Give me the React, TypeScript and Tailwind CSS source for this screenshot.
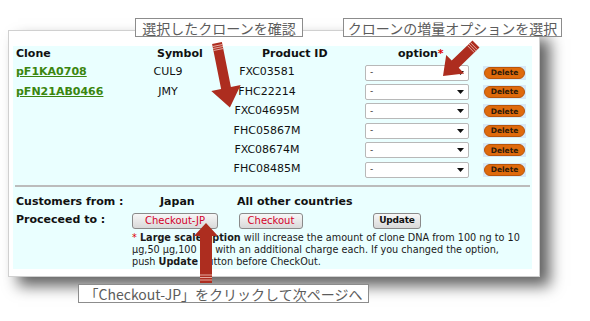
import React from "react";

const rows = [
  { clone: "pF1KA0708", symbol: "CUL9", pid: "FXC03581" },
  { clone: "pFN21AB0466", symbol: "JMY", pid: "FHC22214" },
  { clone: "", symbol: "", pid: "FXC04695M" },
  { clone: "", symbol: "", pid: "FHC05867M" },
  { clone: "", symbol: "", pid: "FXC08674M" },
  { clone: "", symbol: "", pid: "FHC08485M" },
];

const Label = ({ text, className }: { text: string; className: string }) => (
  <div
    className={`absolute h-[19px] flex items-center justify-center bg-white border border-[#8c8c8c] text-[14px] leading-none text-[#5c5c5c] font-['Noto_Sans_CJK_JP',sans-serif] ${className}`}
  >
    {text}
  </div>
);

const OptionSelect = () => (
  <div className="ml-[5px] w-[104px] h-[16px] bg-white border border-[#b8b8b8] rounded-[2px] flex items-center justify-between pl-[4px] pr-[4px]">
    <span className="text-[9px] text-[#333]">-</span>
    <svg width="7" height="4" viewBox="0 0 7 4">
      <polygon points="0,0 7,0 3.5,4" fill="#111" />
    </svg>
  </div>
);

const DeleteButton = () => (
  <div className="ml-[8px] w-[43px] h-[14px] bg-[#d7e9f7] flex items-center justify-center">
    <div className="w-[41px] h-[12px] rounded-full bg-[#df6a0c] border border-[#b8560a] flex items-center justify-center text-[7.5px] font-bold text-[#2e1a08] leading-none">
      Delete
    </div>
  </div>
);

const GreyButton = ({ children, className }: { children: React.ReactNode; className: string }) => (
  <div
    className={`h-[16px] flex items-center justify-center rounded-[3px] border border-[#8a8a8a] bg-gradient-to-b from-[#f7f7f7] to-[#d9d9d9] leading-none ${className}`}
  >
    {children}
  </div>
);

const Arrows = () => (
  <svg className="absolute inset-0 pointer-events-none" width="590" height="321" viewBox="0 0 590 321">
    {/* arrow to product list */}
    <polygon
      points="212.1,44 221.9,42 230.9,87 240.7,85.1 229.9,107.6 211.3,90.9 221.1,89"
      fill="#ad2d1f"
    />
    <line x1="212.6" y1="46.5" x2="222.4" y2="44.5" stroke="#f3c9c2" strokeWidth="0.8" />
    <line x1="213.1" y1="48.5" x2="222.9" y2="46.5" stroke="#f3c9c2" strokeWidth="0.8" />
    <line x1="213.6" y1="50.5" x2="223.4" y2="48.5" stroke="#f3c9c2" strokeWidth="0.8" />
    {/* arrow to option select */}
    <polygon
      points="479.5,47.6 472.5,40.4 451.7,60.6 446.2,54.9 443,76 464.2,73.5 458.7,67.8"
      fill="#ad2d1f"
    />
    <line x1="477.4" y1="49.7" x2="470.4" y2="42.5" stroke="#f3c9c2" strokeWidth="0.8" />
    <line x1="475.9" y1="51.2" x2="468.9" y2="44" stroke="#f3c9c2" strokeWidth="0.8" />
    <line x1="474.4" y1="52.7" x2="467.4" y2="45.5" stroke="#f3c9c2" strokeWidth="0.8" />
    {/* arrow to checkout-jp */}
    <polygon points="206,223 218,236 212,236 212,283 200,283 200,236 194,236" fill="#ad2d1f" />
    <line x1="200" y1="275" x2="212" y2="275" stroke="#f3c9c2" strokeWidth="0.8" />
    <line x1="200" y1="277.5" x2="212" y2="277.5" stroke="#f3c9c2" strokeWidth="0.8" />
    <line x1="200" y1="280" x2="212" y2="280" stroke="#f3c9c2" strokeWidth="0.8" />
  </svg>
);

export default function App() {
  return (
    <div className="relative w-[590px] h-[321px] bg-white overflow-hidden font-['DejaVu_Sans',sans-serif] text-[#111]">
      <div className="pt-[30px] pl-[8px]">
        <div className="w-[532px] h-[247px] bg-white border border-[#d0d0d0] shadow-[10px_9px_14px_rgba(0,0,0,0.62)] pt-[15px] pl-[4px]">
          <div className="w-[519px] h-[223px] bg-[#eaffff]">
            <div className="grid grid-cols-[132px_75px_140px_115px_57px]">
              <div className="h-[17px] flex items-center pl-[3px] text-[11px] font-bold">Clone</div>
              <div className="h-[17px] flex items-center pl-[12px] text-[11px] font-bold">Symbol</div>
              <div className="h-[17px] flex items-center pl-[42px] text-[11px] font-bold">Product ID</div>
              <div className="h-[17px] flex items-center pl-[38px] text-[11px] font-bold">
                option<span className="text-[#e00000]">*</span>
              </div>
              <div className="h-[17px]" />
              {rows.map((r) => (
                <React.Fragment key={r.pid}>
                  <div className="h-[19.4px] flex items-center pl-[3px] text-[11px] font-bold text-[#3b860f] underline">
                    {r.clone}
                  </div>
                  <div className="h-[19.4px] flex items-center pl-[8px]">
                    <span className="w-[30px] text-center text-[11px]">{r.symbol}</span>
                  </div>
                  <div className="h-[19.4px] flex items-center">
                    <span className="w-[94px] text-center text-[11px]">{r.pid}</span>
                  </div>
                  <div className="h-[19.4px] flex items-center">
                    <OptionSelect />
                  </div>
                  <div className="h-[19.4px] flex items-center">
                    <DeleteButton />
                  </div>
                </React.Fragment>
              ))}
            </div>

            <div className="mt-[6px] ml-[2px] w-[515px] h-[2px] bg-[#bcbcbc]" />

            <div className="mt-[7px] h-[16px] grid grid-cols-[119px_100px_auto] items-center text-[11px] font-bold">
              <div className="pl-[3px]">Customers from :</div>
              <div className="pl-[28px]">Japan</div>
              <div className="pl-[5px]">All other countries</div>
            </div>

            <div className="mt-[2px] h-[16px] grid grid-cols-[119px_100px_auto] items-center">
              <div className="pl-[3px] text-[11px] font-bold">Proceceed to :</div>
              <div>
                <GreyButton className="w-[86px] text-[10px] text-[#d4002a]">Checkout-JP</GreyButton>
              </div>
              <div className="flex items-center pl-[7px]">
                <GreyButton className="w-[64px] text-[10px] text-[#d4002a]">Checkout</GreyButton>
                <GreyButton className="ml-[70px] w-[48px] text-[9px] font-bold tracking-[-0.2px] text-[#111]">
                  Update
                </GreyButton>
              </div>
            </div>

            <div className="mt-[4px] pl-[119px] text-[9.7px] leading-[12px] whitespace-nowrap text-[#1a1a1a]">
              <span className="text-[#e00000]">*</span> <b>Large scale option</b> will increase the amount of clone DNA from 100 ng to 10
              <br />
              μg,50 μg,100 μg with an additional charge each. If you changed the option,
              <br />
              push <b>Update</b> button before CheckOut.
            </div>
          </div>
        </div>
      </div>

      <Label text="選択したクローンを確認" className="left-[135px] top-[18px] w-[168px]" />
      <Label text="クローンの増量オプションを選択" className="left-[343px] top-[18px] w-[219px]" />
      <Label text="「Checkout-JP」をクリックして次ページへ" className="left-[78px] top-[284px] w-[291px]" />

      <Arrows />
    </div>
  );
}
